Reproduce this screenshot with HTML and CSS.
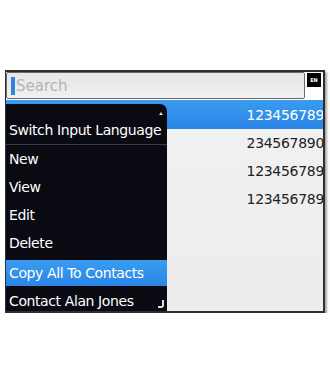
FILE: index.html
```html
<!DOCTYPE html>
<html>
<head>
<meta charset="utf-8">
<link rel="stylesheet" href="styles.css">
</head>
<body>
<div class="screen">
  <div class="searchbar">
    <div class="field"><span class="cursor"></span><span class="placeholder">Search</span></div>
    <div class="lang">EN</div>
  </div>
  <div class="list">
    <div class="row sel">123456789</div>
    <div class="row">234567890</div>
    <div class="row">123456789</div>
    <div class="row">123456789</div>
  </div>
  <div class="menu">
    <span class="up"></span>
    <div class="item sep">Switch Input Language</div>
    <div class="item">New</div>
    <div class="item">View</div>
    <div class="item">Edit</div>
    <div class="item">Delete</div>
    <div class="item hl">Copy All To Contacts</div>
    <div class="item">Contact Alan Jones</div>
    <span class="down"></span>
  </div>
</div>
</body>
</html>
```
FILE: styles.css
```css
html, body { margin: 0; padding: 0; background: #fff; }
body { font-family: "DejaVu Sans", sans-serif; }
.screen {
  position: relative;
  margin: 70px 0 0 5px;
  width: 317px;
  height: 239px;
  border: 2px solid #2e2e2e;
  border-left-width: 1px;
  background: linear-gradient(to bottom, #f2f2f2, #ececec);
  box-shadow: 2px 2px 2px rgba(0,0,0,0.35);
  overflow: hidden;
  display: flex;
  flex-direction: column;
}
.searchbar {
  height: 28px;
  display: flex;
  align-items: flex-start;
  background: #fff;
}
.field {
  flex: 1;
  height: 25px;
  margin: 0 2px 0 0;
  background: linear-gradient(to bottom, #e6e6e6, #f0f0f0);
  border: 1px solid #6a6a6a;
  border-radius: 2px;
  display: flex;
  align-items: center;
  padding-left: 4px;
}
.cursor { width: 4px; height: 18px; background: #2a86e0; }
.placeholder { color: #b4b4b4; font-size: 15px; margin-left: 1px; }
.lang {
  width: 14px; height: 14px; margin: 1px 2px 0 0;
  background: #000; color: #fff;
  font-size: 5px; font-weight: bold;
  display: flex; align-items: center; justify-content: center;
}
.list { display: flex; flex-direction: column; }
.row {
  height: 28px;
  display: flex; align-items: center; justify-content: flex-end;
  font-size: 14px; color: #222;
  letter-spacing: -0.3px;
  margin-right: -1px;
}
.row.sel {
  height: 29px;
  color: #fff;
  background: linear-gradient(to bottom, #3a9cf0, #2a86e6);
}
.menu {
  position: absolute;
  left: 0; top: 32px; bottom: 0;
  width: 161px;
  background: #0a0a12;
  border-top-right-radius: 7px;
  padding-top: 12px;
  color: #fff;
  font-size: 14px;
  letter-spacing: -0.4px;
}
.item {
  height: 28px;
  display: flex; align-items: center;
  padding-left: 3px;
  white-space: nowrap;
}
.item.sep { border-bottom: 1px solid #3c3c44; }
.item.hl { background: linear-gradient(to bottom, #3a9cf0, #2a86e6); height: 26px; margin: 3px 0 1px; }
.up {
  position: absolute; right: 4px; top: 8px;
  width: 0; height: 0;
  border-left: 2px solid transparent; border-right: 2px solid transparent;
  border-bottom: 3px solid #ddd;
}
.down {
  position: absolute; right: 3px; bottom: 3px;
  width: 4px; height: 6px;
  border-right: 2px solid #cfe6f6;
  border-bottom: 2px solid #cfe6f6;
  border-bottom-right-radius: 3px;
}
```
